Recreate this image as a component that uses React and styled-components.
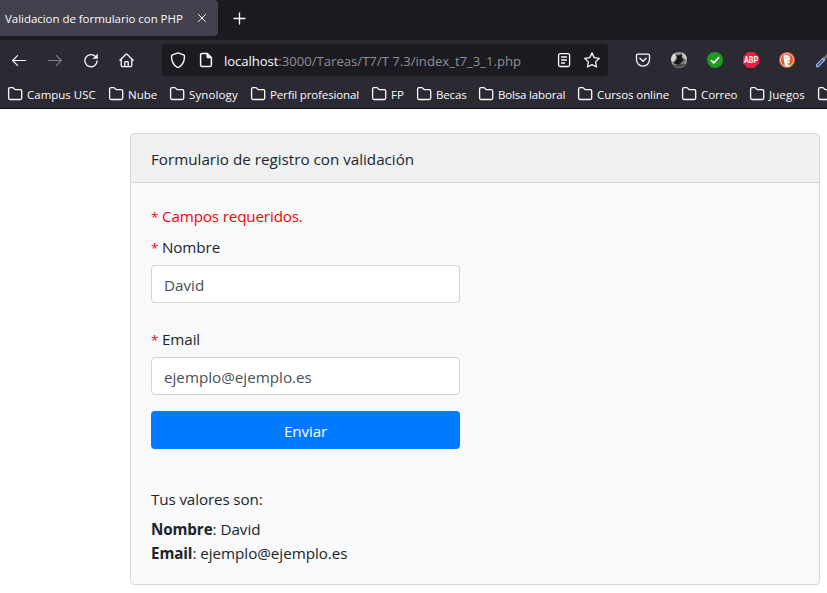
import React from "react";
import styled, { createGlobalStyle } from "styled-components";

const GlobalStyle = createGlobalStyle`
  *, *::before, *::after { box-sizing: border-box; }
  body { margin: 0; background: #fff; overflow: hidden; font-family: "Open Sans", "Noto Sans", sans-serif; }
`;

const Window = styled.div`
  width: 827px;
  height: 593px;
  overflow: hidden;
  display: flex;
  flex-direction: column;
`;

const TabStrip = styled.div`
  height: 40px;
  display: flex;
  background: #1c1b22;
  color: #fbfbfe;
`;

const Tab = styled.div`
  width: 218px;
  height: 36px;
  padding: 0 8px 0 5px;
  display: flex;
  align-items: center;
  justify-content: space-between;
  background: #42414d;
  border-radius: 0 4px 4px 0;
  box-shadow: 0 0 3px rgba(0, 0, 0, 0.4);
  font-size: 11.5px;
  letter-spacing: -0.04px;
  line-height: 36px;
  white-space: nowrap;
`;

const TabTitle = styled.span`
  padding-top: 1px;
`;

const NewTab = styled.div`
  width: 42px;
  height: 36px;
  display: flex;
  align-items: center;
  justify-content: center;
`;

const NavBar = styled.div`
  height: 40px;
  display: flex;
  align-items: center;
  background: #2b2a33;
  color: #fbfbfe;
`;

const NavButtons = styled.div`
  width: 162px;
  flex: none;
  padding-left: 11px;
  display: flex;
  gap: 20px;
`;

const Icon = styled.svg`
  width: 16px;
  height: 16px;
  flex: none;
  display: block;
  fill: none;
  stroke: currentColor;
  stroke-width: ${(p) => p.$w || 1.3};
  stroke-linecap: round;
  stroke-linejoin: round;
  opacity: ${(p) => (p.$dim ? 0.4 : 1)};
`;

const UrlBar = styled.div`
  width: 446px;
  height: 32px;
  flex: none;
  padding: 0 8px;
  display: flex;
  align-items: center;
  gap: 12px;
  background: #1c1b22;
  border-radius: 4px;
`;

const Url = styled.div`
  flex: 1;
  margin-left: -2px;
  padding-top: 1px;
  font-size: 13.1px;
  letter-spacing: 0.01px;
  line-height: 30px;
  white-space: pre;
  color: #8f8f97;
`;

const Host = styled.span`
  color: #fbfbfe;
  letter-spacing: -0.06px;
`;

const Extensions = styled.div`
  flex: none;
  margin-left: 27px;
  display: flex;
  gap: 20px;
`;

const BookmarkBar = styled.div`
  height: 29px;
  padding-left: 7px;
  display: flex;
  align-items: flex-start;
  overflow: hidden;
  background: #2b2a33;
  border-bottom: 1px solid #0c0c0d;
  color: #fbfbfe;
`;

const Bookmark = styled.div`
  width: ${(p) => p.$width}px;
  height: 28px;
  flex: none;
  display: flex;
  align-items: center;
  gap: 4px;
  font-size: 11.5px;
  letter-spacing: ${(p) => p.$spacing || 0}px;
  white-space: nowrap;
`;

const Page = styled.main`
  flex: 1;
  padding: 24px 7px 8px 130px;
  background: #fff;
  color: #212529;
  font-size: 15.2px;
  line-height: 24px;
`;

const Card = styled.section`
  height: 452px;
  border: 1px solid #d6d8da;
  border-radius: 4px;
  background: #f8f9fb;
  overflow: hidden;
`;

const CardHeader = styled.header`
  height: 49px;
  padding: 13px 20px 11px;
  background: #eff0f2;
  border-bottom: 1px solid #d2d4d6;
`;

const CardBody = styled.div`
  padding: 21px 20px 0;
`;

const Form = styled.form`
  width: 309px;
  display: flex;
  flex-direction: column;
`;

const Required = styled.span`
  display: inline-block;
  width: 11px;
  font-size: 13.5px;
  line-height: 20px;
  color: #f00;
`;

const Note = styled.p`
  margin: 0 0 7px;
  color: #f00;
  letter-spacing: -0.14px;
`;

const Label = styled.label`
  margin-bottom: 6px;
  letter-spacing: -0.1px;
`;

const Field = styled.input`
  width: 100%;
  height: 38px;
  margin: 0 0 ${(p) => p.$gap}px;
  padding: 3px 12px 1px;
  border: 1px solid #ced4da;
  border-radius: 4px;
  outline: none;
  background: #fff;
  color: #495057;
  font: inherit;
`;

const Submit = styled.button`
  height: 38px;
  padding: 3px 12px 1px;
  border: 0;
  border-radius: 4px;
  background: #007bff;
  color: #fff;
  font: inherit;
  letter-spacing: -0.1px;
`;

const ResultTitle = styled.p`
  margin: 38px 0 6px;
  letter-spacing: -0.12px;
`;

const Result = styled.div`
  letter-spacing: -0.03px;
  b { font-weight: 700; letter-spacing: -0.1px; }
`;

const bookmarks = [
  ["Campus USC", 101, 0],
  ["Nube", 61, 0],
  ["Synology", 81, 0.12],
  ["Perfil profesional", 121, -0.13],
  ["FP", 45, 0],
  ["Becas", 62, -0.15],
  ["Bolsa laboral", 99, -0.17],
  ["Cursos online", 104, -0.08],
  ["Correo", 68, -0.1],
  ["Juegos", 68, 0.1],
  ["", 60, 0],
];

const Folder = () => (
  <Icon viewBox="0 0 16 16">
    <path d="M1.600 12V3q0-1.400 1.400-1.400h2.600q.7 0 1.100.5l1 1.200q.3.300.8.300h4.800q1.400 0 1.400 1.400v7q0 1.500-1.400 1.500H3q-1.400 0-1.400-1.500z" />
  </Icon>
);

export default function App() {
  return (
    <Window>
      <GlobalStyle />
      <TabStrip>
        <Tab>
          <TabTitle>Validacion de formulario con PHP</TabTitle>
          <Icon viewBox="0 0 16 16" $w={1}><path d="M4.500 4.500l7 7M11.500 4.500l-7 7" /></Icon>
        </Tab>
        <NewTab>
          <Icon viewBox="0 0 16 16" $w={1.300}><path d="M8.500 3v11M3 8.500h11" /></Icon>
        </NewTab>
      </TabStrip>
      <NavBar>
        <NavButtons>
          <Icon viewBox="0 0 16 16" $w={1.200}><path d="M14.500 8.500H1.700M6.500 3.700L1.700 8.500l4.800 4.800" /></Icon>
          <Icon viewBox="0 0 16 16" $dim $w={1.200}><path d="M1.500 8.500h12.800M9.500 3.700l4.800 4.800-4.800 4.800" /></Icon>
          <Icon viewBox="0 0 16 16" $w={1.300}>
            <path d="M12.400 4.400a6.100 6.100 0 1 0 1.700 4.600" />
            <path d="M14.500 2.300v4.200h-4.200z" fill="currentColor" strokeWidth=".5" />
          </Icon>
          <Icon viewBox="0 0 16 16">
            <path d="M.9 8.300L6.900 2.200q.6-.6 1.200 0l6 6.100M2.200 7.200v6q0 1.400 1.300 1.400h8q1.300 0 1.300-1.400v-6M5.800 14.500v-4q0-.8.800-.8h1.800q.8 0 .8.800v4" />
          </Icon>
        </NavButtons>
        <UrlBar>
          <Icon viewBox="0 0 16 16" $w={1.400}>
            <path d="M8 .8l5.600 2q.9.300.9 1.300c0 5.200-1.800 9-5.500 11q-1 .5-2 0C3.300 13.100 1.500 9.300 1.500 4.100q0-1 .9-1.300z" />
          </Icon>
          <Icon viewBox="0 0 16 16" $w={1.500}>
            <path d="M9.300 1.500H4q-1.400 0-1.400 1.400v10.200q0 1.400 1.400 1.400h8q1.400 0 1.400-1.400V5.600z" />
            <path d="M9 1.500v4.300h4.300z" fill="currentColor" strokeWidth="1" />
          </Icon>
          <Url><Host>localhost</Host>:3000/Tareas/T7/T 7.3/index_t7_3_1.php</Url>
          <Icon viewBox="0 0 16 16" $w={1.300}>
            <rect x="2.600" y="1.700" width="11" height="12.800" rx="1.500" />
            <path d="M5.500 5h5M5.500 8h5M5.500 11h3" />
          </Icon>
          <Icon viewBox="0 0 16 16" $w={1.300}>
            <path d="M8 .9l2.200 4.700 5.100.7-3.700 3.600.9 5.100L8 12.600 3.500 15l.9-5.100L.7 6.300l5.100-.7z" />
          </Icon>
        </UrlBar>
        <Extensions>
          <Icon viewBox="0 0 16 16">
            <path d="M2.900 2.200h10.200q1.400 0 1.400 1.400v4a6.500 6.500 0 0 1-13 0v-4q0-1.400 1.400-1.400z" />
            <path d="M4.900 6.300L8 9.300l3.100-3" />
          </Icon>
          <Icon viewBox="0 0 16 16">
            <g stroke="none">
              <circle cx="8" cy="8" r="8" fill="#9b9b9a" />
              <path d="M0 8a8 8 0 0 1 4-7L5 6 2 10z" fill="#d8d8d6" />
              <path d="M11 .6a8 8 0 0 1 5 6.400l-3-1z" fill="#c9c9c7" />
              <path d="M5 2l2 1.500 4-1.500-.3 3.500L14 9l-4 2-2 2.500L4.500 12 2 11l2.500-2L6 6z" fill="#141517" />
              <path d="M1.500 12.500L6 13l3-1.500L14.500 12A8 8 0 0 1 1.500 12.500z" fill="#4d4c4b" />
              <path d="M11 9l4-1-2 4-3 0z" fill="#777674" />
            </g>
          </Icon>
          <Icon viewBox="0 0 16 16" $w={1.600}>
            <circle cx="8" cy="8" r="8" fill="#1d9a20" stroke="none" />
            <path d="M4.300 8.500l2.500 2.400 5-5.400" stroke="#fff" />
          </Icon>
          <Icon viewBox="0 0 16 16">
            <path d="M4.700 0h6.600L16 4.700v6.600L11.300 16H4.700L0 11.300V4.700z" fill="#ed1e45" stroke="none" />
            <text x="8" y="11" textAnchor="middle" textLength="14" lengthAdjust="spacingAndGlyphs" fontFamily="Roboto, sans-serif" fontSize="8.300" fontWeight="700" fill="#fff" stroke="none">ABP</text>
          </Icon>
          <Icon viewBox="0 0 16 16">
            <g stroke="none">
              <circle cx="8" cy="8" r="8" fill="#de5833" />
              <circle cx="8" cy="8" r="6.500" fill="none" stroke="#f5d3c8" strokeWidth=".9" />
              <path d="M6 14L4.500 6.200Q4.200 3 7 2.700q4.500.2 4.200 5l-.7 2.100 1 4.300-3 .6z" fill="#fff" />
              <path d="M8 8q2-1 4-.2Q11 9.700 8 9.500z" fill="#f5bd20" />
              <path d="M8.300 11.500l3-1 .2 3-2.700-.6z" fill="#62b54b" />
              <circle cx="6.800" cy="6" r=".6" fill="#2d4f8e" />
              <circle cx="9.800" cy="5.700" r=".5" fill="#2d4f8e" />
            </g>
          </Icon>
          <Icon viewBox="0 0 16 16">
            <path d="M2.600 13.400L8.500 7.500" stroke="#c8d4e8" strokeWidth="3.600" />
            <path d="M2.800 13.200L7.500 8.500" stroke="#3562c8" strokeWidth="2.200" />
            <path d="M9.500 6.500l3-3.500" stroke="#77777c" strokeWidth="2.600" />
          </Icon>
        </Extensions>
      </NavBar>
      <BookmarkBar>
        {bookmarks.map(([name, width, spacing], i) => (
          <Bookmark key={i} $width={width} $spacing={spacing}>
            <Folder />
            <span>{name}</span>
          </Bookmark>
        ))}
      </BookmarkBar>
      <Page>
        <Card>
          <CardHeader>Formulario de registro con validación</CardHeader>
          <CardBody>
            <Form>
              <Note><Required>*</Required>Campos requeridos.</Note>
              <Label htmlFor="nombre"><Required>*</Required>Nombre</Label>
              <Field id="nombre" defaultValue="David" $gap={24} />
              <Label htmlFor="email"><Required>*</Required>Email</Label>
              <Field id="email" defaultValue="ejemplo@ejemplo.es" $gap={16} />
              <Submit type="button">Enviar</Submit>
            </Form>
            <ResultTitle>Tus valores son:</ResultTitle>
            <Result><b>Nombre</b>: David</Result>
            <Result><b>Email</b>: ejemplo@ejemplo.es</Result>
          </CardBody>
        </Card>
      </Page>
    </Window>
  );
}
